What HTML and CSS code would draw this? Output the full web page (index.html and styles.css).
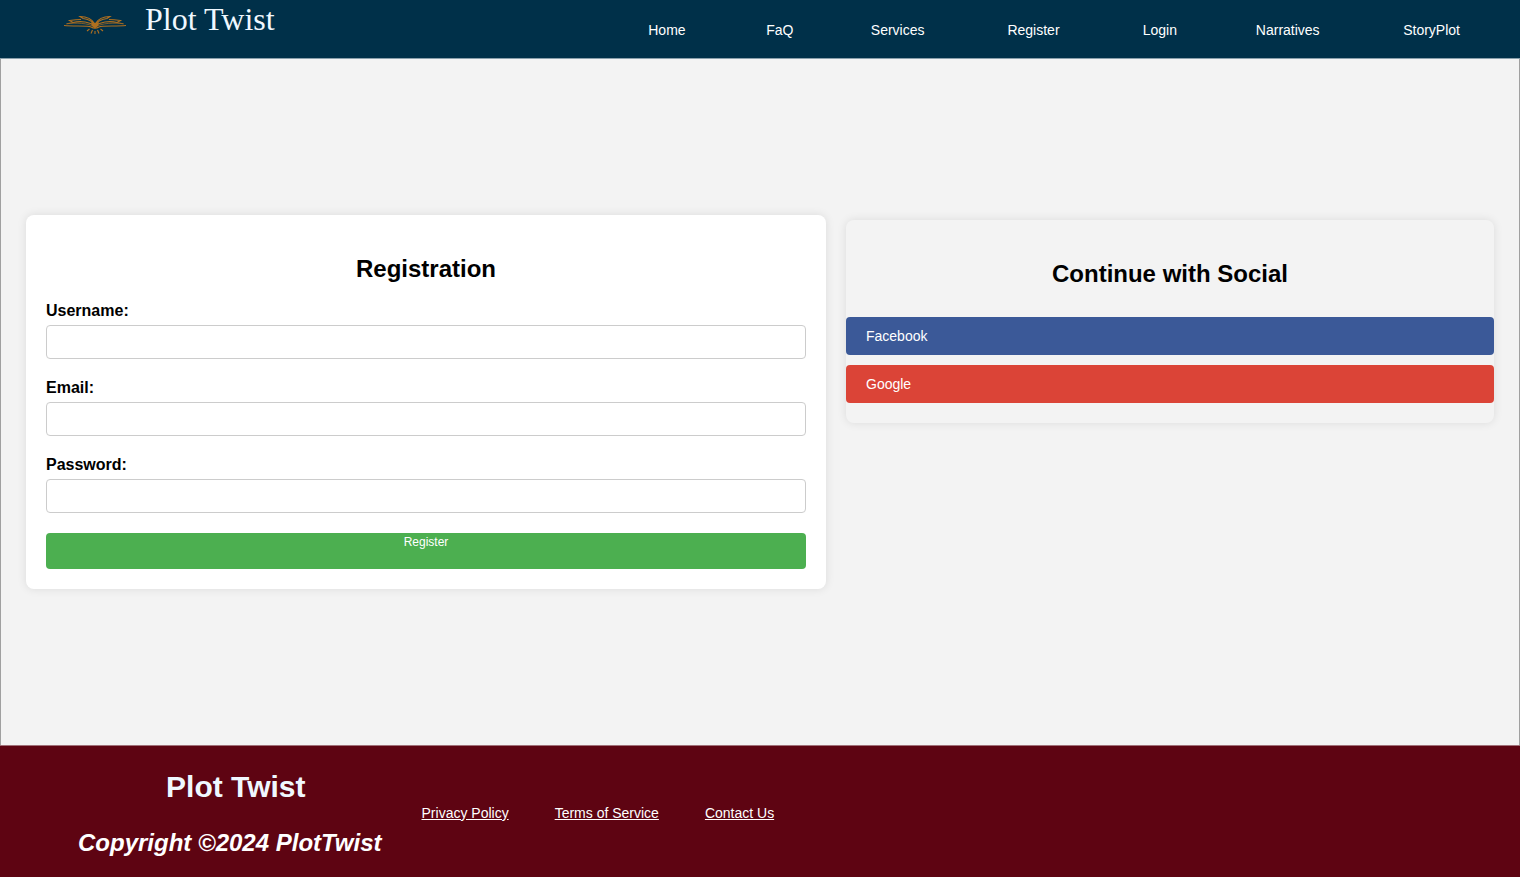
FILE: index.html
```html
<!DOCTYPE html>
<html lang="en">
<head>
<meta charset="utf-8">
<meta name="viewport" content="width=device-width, initial-scale=1">
<title>Plot Twist</title>
<link rel="stylesheet" href="styles.css">
</head>
<body>
<header class="header">
  <div class="brand">
    <svg class="logo" viewBox="0 0 62 22" aria-hidden="true">
      <g class="logo-lines">
        <path d="M31 10C28 5 23 2.500 16 2.500L19 4.500C24 5 28 7 31 11C34 7 38 5 43 4.500L46 2.500C39 2.500 34 5 31 10"/>
        <path d="M17 5.500C13 5.500 9 6 5.500 6.500L9 8.500C17 6.500 26 8 31 12C36 8 45 6.500 53 8.500L56.500 6.500C53 6 49 5.500 45 5.500"/>
        <path d="M9 8.500L2.500 9.800C12 8.500 24 9 31 13C38 9 50 8.500 59.500 9.800L53 8.500" class="thin"/>
        <path d="M0 11.500C10 12.500 24 11.500 27 13Q31 15.500 35 13C38 11.500 52 12.500 62 11.500"/>
        <path d="M25.500 15L23 17M28.500 16L27 19.500M31 17V20M33.500 16L35 19.500M36.500 15L39 17"/>
      </g>
      <path class="logo-core" d="M27 8L31 10L35 8L34 12L31 14.500L28 12Z"/>
    </svg>
    <span class="brand-name">Plot Twist</span>
  </div>
  <nav class="nav" aria-label="Main">
    <a href="#home">Home</a>
    <a href="#faq">FaQ</a>
    <a href="#services">Services</a>
    <a href="#register">Register</a>
    <a href="#login">Login</a>
    <a href="#narratives">Narratives</a>
    <a href="#storyplot">StoryPlot</a>
  </nav>
</header>
<main class="main">
  <div class="panels">
    <form class="card register" id="register">
      <h2>Registration</h2>
      <label for="username">Username:</label>
      <input type="text" id="username" name="username">
      <label for="email">Email:</label>
      <input type="email" id="email" name="email">
      <label for="password">Password:</label>
      <input type="password" id="password" name="password">
      <button type="submit">Register</button>
    </form>
    <section class="card social">
      <h2>Continue with Social</h2>
      <div class="social-links">
        <a class="facebook" href="#facebook">Facebook</a>
        <a class="google" href="#google">Google</a>
      </div>
    </section>
  </div>
</main>
<footer class="footer">
  <div class="footer-brand">
    <h2>Plot Twist</h2>
    <p>Copyright ©2024 PlotTwist</p>
  </div>
  <nav class="footer-links" aria-label="Footer">
    <a href="#privacy">Privacy Policy</a>
    <a href="#terms">Terms of Service</a>
    <a href="#contact">Contact Us</a>
  </nav>
</footer>
</body>
</html>
```
FILE: styles.css
```css
* { box-sizing: border-box; }

body {
  margin: 0;
  min-height: 100vh;
  display: flex;
  flex-direction: column;
  background: #f3f3f3;
  font: 14px/18px "Liberation Sans Narrow", "Arial Narrow", "Liberation Sans", sans-serif;
  color: #000;
}

h2 {
  margin: 20px 0;
  font: bold 24px/27px "Liberation Sans", Arial, sans-serif;
  text-align: center;
}

.header {
  display: flex;
  justify-content: space-between;
  background: #003049;
  border-bottom: 1px solid #8aa0ac;
  color: aliceblue;
}

.brand {
  display: flex;
  align-items: flex-start;
  gap: 19px;
  padding: 1px 0 20px 64px;
}

.logo {
  width: 62px;
  height: 22px;
  margin-top: 13px;
}

.logo-lines {
  fill: none;
  stroke: #b0701f;
  stroke-width: 1.1;
}

.thin { stroke-width: 0.7; }

.logo-core { fill: #b0701f; }

.brand-name {
  font: 32px/37px "Liberation Serif", "Times New Roman", serif;
}

.nav {
  flex: 0 1 60%;
  display: grid;
  grid-template-columns: 118fr 108fr 128fr 144fr 109fr 147fr 141fr;
  align-items: center;
  padding: 2px 18px 0 0;
  text-align: center;
}

.nav a {
  color: #fff;
  text-decoration: none;
}

.main {
  flex: 1;
  display: flex;
  align-items: center;
  padding: 20px 25px;
  border: solid #a0a0a0;
  border-width: 0 1px;
}

.panels {
  flex: 1;
  display: grid;
  grid-template-columns: 800fr 648fr;
  gap: 20px;
  align-items: start;
}

.card {
  border-radius: 8px;
  box-shadow: 0 0 10px rgba(0, 0, 0, 0.1);
}

.register {
  display: flex;
  flex-direction: column;
  padding: 20px;
  background: #fff;
}

.register label {
  margin-bottom: 5px;
  font: bold 16px/18px "Liberation Sans", Arial, sans-serif;
}

.register input {
  width: 100%;
  height: 34px;
  margin-bottom: 20px;
  padding: 8px;
  border: 1px solid #ccc;
  border-radius: 4px;
  background: #fff;
}

.register button {
  display: flex;
  justify-content: center;
  align-items: flex-start;
  height: 36px;
  padding: 1px;
  border: 0;
  border-radius: 4px;
  background: #4caf50;
  color: #fff;
  font: 12px/16px "Liberation Sans Narrow", "Arial Narrow", "Liberation Sans", sans-serif;
  cursor: pointer;
}

.social {
  margin-top: 5px;
  padding: 20px 0;
}

.social-links {
  display: flex;
  flex-direction: column;
  gap: 10px;
  padding-top: 10px;
}

.social-links a {
  padding: 10px 20px;
  border-radius: 4px;
  color: #fff;
  text-decoration: none;
}

.facebook { background: #3b5998; }

.google { background: #db4437; }

.footer {
  display: flex;
  align-items: center;
  gap: 40px;
  padding: 24px 78px 18px;
  background: #5e0412;
  border-top: 1px solid #a07078;
}

.footer-brand h2 {
  margin: 0 0 22px;
  padding-left: 12px;
  font-size: 30px;
  line-height: 34px;
  color: aliceblue;
}

.footer-brand p {
  margin: 0;
  font: italic bold 24px/33px "Liberation Sans", Arial, sans-serif;
  color: #fff;
}

.footer-links {
  display: flex;
  gap: 46px;
  padding-bottom: 4px;
}

.footer-links a { color: #fff; }
```
